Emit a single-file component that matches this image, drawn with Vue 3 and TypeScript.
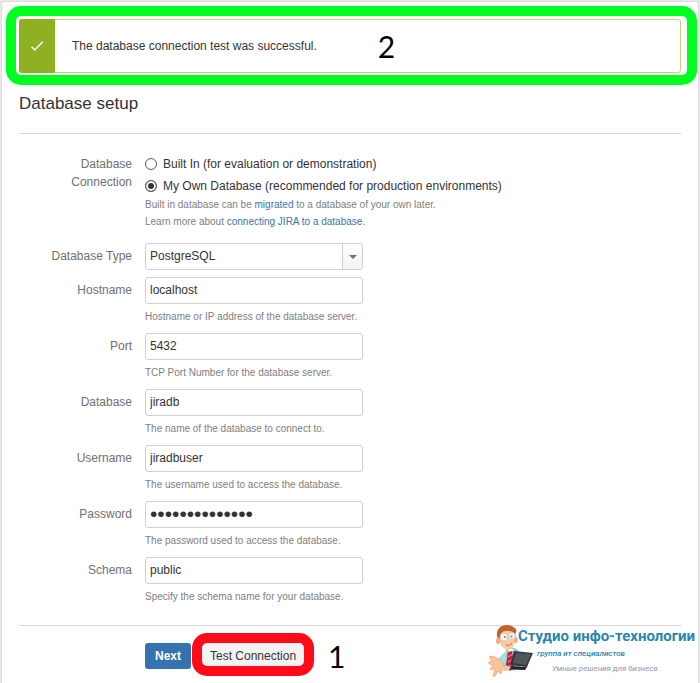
<script setup lang="ts">
import { ref } from 'vue'

interface Field {
  id: string
  label: string
  type: 'text' | 'password'
  value: string
  hint: string
}

const connection = ref<'builtin' | 'own'>('own')
const databaseType = ref('PostgreSQL')
const databaseTypes = ['PostgreSQL', 'MySQL', 'Oracle', 'SQL Server']

const fields = ref<Field[]>([
  { id: 'hostname', label: 'Hostname', type: 'text', value: 'localhost', hint: 'Hostname or IP address of the database server.' },
  { id: 'port', label: 'Port', type: 'text', value: '5432', hint: 'TCP Port Number for the database server.' },
  { id: 'database', label: 'Database', type: 'text', value: 'jiradb', hint: 'The name of the database to connect to.' },
  { id: 'username', label: 'Username', type: 'text', value: 'jiradbuser', hint: 'The username used to access the database.' },
  { id: 'password', label: 'Password', type: 'password', value: 'jiradbpassword', hint: 'The password used to access the database.' },
  { id: 'schema', label: 'Schema', type: 'text', value: 'public', hint: 'Specify the schema name for your database.' },
])
</script>

<template>
  <main class="panel">
    <div class="alert" role="status">
      <div class="alert-icon">
        <svg viewBox="0 0 14 12" width="14" height="12" aria-hidden="true">
          <path d="M1.500 6.800 4.800 10 12.800 1.800" fill="none" stroke="#fff" stroke-width="1.500" />
        </svg>
      </div>
      <p class="alert-text">The database connection test was successful.</p>
      <span class="step">2</span>
      <span class="ring ring-green"></span>
    </div>

    <h1>Database setup</h1>

    <form @submit.prevent>
      <div class="row connection" role="radiogroup" aria-labelledby="connection-label">
        <span id="connection-label" class="label">Database Connection</span>
        <div class="control">
          <label class="radio"><input v-model="connection" type="radio" name="connection" value="builtin" />Built In (for evaluation or demonstration)</label>
          <label class="radio"><input v-model="connection" type="radio" name="connection" value="own" />My Own Database (recommended for production environments)</label>
          <p class="hint">Built in database can be <a href="#migrate">migrated</a> to a database of your own later.</p>
          <p class="hint">Learn more about <a href="#connecting">connecting JIRA to a database</a>.</p>
        </div>
      </div>

      <div class="row type-row">
        <label class="label" for="database-type">Database Type</label>
        <div class="control">
          <div class="select-box">
            <select id="database-type" v-model="databaseType" class="box">
              <option v-for="t in databaseTypes" :key="t">{{ t }}</option>
            </select>
            <span class="arrow" aria-hidden="true"></span>
          </div>
        </div>
      </div>

      <div v-for="f in fields" :key="f.id" class="row field">
        <label class="label" :for="f.id">{{ f.label }}</label>
        <div class="control">
          <input :id="f.id" v-model="f.value" :type="f.type" class="box" />
          <p class="hint">{{ f.hint }}</p>
        </div>
      </div>

      <div class="actions">
        <button class="primary" type="submit">Next</button>
        <div class="marked">
          <button class="plain" type="button">Test Connection</button>
          <span class="ring ring-red"></span>
        </div>
        <span class="step">1</span>
      </div>
    </form>

    <div class="brand">
      <svg class="mascot" viewBox="0 0 50 54" width="50" height="54" aria-hidden="true">
        <path d="M18 24 Q26 20 31 27 L32 43 Q24 48 15 44 Z" fill="#83cfd0" />
        <path d="M27 28 Q35 31 33 38 L28 40 Z" fill="#5fb9be" />
        <path d="M17 27 Q10 33 7 38 L15 43 19 35 Z" fill="#a4dfdd" />
        <path d="M19 24 22 29 26 24 Z" fill="#fff" />
        <path d="M20 27 24 26 26 41 22 46 18 40 Z" fill="#c8203a" />
        <path d="M20 32 25 29 M20 37 26 34 M20 42 26 38" stroke="#f3a0a4" stroke-width="1" />
        <path d="M12 35 Q7 31 2 31 Q0 33 5 36 L1 37 Q-1 39 5 40 L2 44 Q2 46 7 43 L5 51 Q7 53 10 46 L13 49 Q15 48 13 43 L16 39 Z" fill="#fbc29b" stroke="#e99b74" stroke-width=".6" />
        <path d="M11 9 Q10 4 14 2 Q21-1 26 3 Q29 8 27 17 Q25 25 19 25 Q12 22 11 14 Z" fill="#fdc9a1" />
        <path d="M9 12 Q8 4 14 1 Q22-2 28 4 Q29 7 27 9 Q23 5 18 6 Q13 5 12 14 Z" fill="#c2632b" />
        <ellipse cx="10" cy="16" rx="2" ry="3" fill="#f2a67e" />
        <ellipse cx="28" cy="15" rx="1.600" ry="3" fill="#f2a67e" />
        <circle cx="16" cy="12" r="4" fill="#f7f4ef" stroke="#c9cbc9" />
        <circle cx="24" cy="11" r="3.400" fill="#f7f4ef" stroke="#c9cbc9" />
        <circle cx="17" cy="12" r="1" fill="#6c7f86" />
        <circle cx="23.500" cy="11.500" r="1" fill="#6c7f86" />
        <path d="M18 20 Q22 22 24 18" fill="none" stroke="#c76a58" stroke-width="1" />
        <path d="M26 26 45 28 39 42 22 40 Z" fill="#33383d" />
        <path d="M28 28 43 29 38 40 25 38 Z" fill="#50565c" />
        <path d="M20 41 39 42 37 45 17 44 Z" fill="#202428" />
        <path d="M14 43 Q18 39 23 42 L21 45 15 46 Z" fill="#fbc29b" />
      </svg>
      <div class="brand-text">
        <strong>Студио инфо-технологии</strong>
        <em class="tagline">группа ит специалистов</em>
        <em class="motto">Умные решения для бизнеса</em>
      </div>
    </div>
  </main>
</template>

<style>
body {
  background: #e9e9e9;
}
</style>

<style scoped>
* {
  box-sizing: border-box;
}

.panel {
  position: relative;
  min-height: calc(100vh - 1px);
  margin: 1px 1px 0;
  padding: 17px 17px 12px;
  border: 1px solid #ddd;
  border-bottom: 0;
  border-radius: 4px 4px 0 0;
  background: #fff;
  color: #333;
  font: 12px/18px "Liberation Sans", Arial, sans-serif;
}

p {
  margin: 0;
}

.alert {
  position: relative;
  display: flex;
  align-items: center;
  height: 54px;
  border: 1px solid #c3d27c;
  border-radius: 3px;
}

.alert-icon {
  display: flex;
  align-items: center;
  justify-content: center;
  align-self: stretch;
  width: 36px;
  margin: -1px 0 -1px -1px;
  border-radius: 3px 0 0 3px;
  background: #8eb021;
}

.alert-text {
  margin-left: 17px;
}

.step {
  color: #000;
  font: 30px/36px Lato, sans-serif;
}

.alert .step {
  margin-left: 61px;
}

.ring {
  position: absolute;
  border: 10px solid;
  pointer-events: none;
}

.ring-green {
  inset: -14px -17px -13px -14px;
  border-color: #00ff21;
  border-radius: 15px;
}

.ring-red {
  inset: -10px -4px -7px;
  border-color: #ff0a17;
  border-radius: 15px;
}

h1 {
  margin: 0;
  padding: 19px 0 17px;
  border-bottom: 1px solid #d8d8d8;
  font-size: 17px;
  font-weight: 400;
  line-height: 24px;
}

.row {
  display: flex;
  gap: 13px;
}

.label {
  width: 113px;
  padding-top: 4px;
  color: #707070;
  text-align: right;
}

.control {
  flex: 1;
}

.connection {
  padding-top: 21px;
}

.connection .label {
  padding: 0 0 0 30px;
}

.radio {
  display: flex;
  align-items: center;
  height: 22px;
  padding-bottom: 4px;
}

.radio + .radio {
  margin-bottom: -3px;
}

.radio input {
  appearance: none;
  width: 12px;
  height: 12px;
  margin: 0 6px 0 0;
  border: 1px solid #555;
  border-radius: 50%;
  background: #fff;
}

.radio input:checked {
  background: #333;
  box-shadow: inset 0 0 0 2px #fff;
}

.hint {
  color: #808080;
  font-size: 10px;
  line-height: 17px;
}

.field .hint {
  padding-top: 4px;
}

a {
  color: #3b73af;
  text-decoration: none;
}

.type-row {
  padding-top: 13px;
}

.field {
  height: 56px;
}

.type-row + .field {
  margin-top: 7px;
}

.box {
  display: block;
  width: 218px;
  height: 27px;
  padding: 0 4px 2px;
  border: 1px solid #d0d0d0;
  border-radius: 3px;
  background: #fff;
  color: #333;
  font: inherit;
}

.box[type='password'] {
  font-size: 21px;
}

.select-box {
  position: relative;
  width: 218px;
}

select.box {
  appearance: none;
}

.arrow {
  position: absolute;
  inset: 1px 1px 1px auto;
  display: grid;
  place-items: center;
  width: 20px;
  border-left: 1px solid #d0d0d0;
  border-radius: 0 2px 2px 0;
  background: linear-gradient(#fff, #f2f2f2);
  pointer-events: none;
}

.arrow::before {
  content: '';
  border: 4px solid transparent;
  border-top-color: #707070;
  border-bottom: 0;
}

.actions {
  display: flex;
  align-items: center;
  margin-top: 12px;
  padding: 12px 0 0 126px;
  border-top: 1px solid #d8d8d8;
}

button {
  height: 26px;
  border: 0;
  border-radius: 3px;
  font: inherit;
}

.primary {
  padding: 0 10px;
  background: #3572b0;
  color: #fff;
  font-weight: 700;
}

.marked {
  position: relative;
  margin: 0 18px 0 5px;
}

.plain {
  padding: 0 14px;
  background: #f3f3f3;
  color: #333;
}

.brand {
  position: absolute;
  right: 3px;
  bottom: 7px;
  display: flex;
  white-space: nowrap;
}

.mascot {
  margin-right: -20px;
}

.brand-text {
  display: flex;
  flex-direction: column;
}

.brand-text strong {
  color: #2a86ab;
  font-size: 15px;
  line-height: 22px;
}

.brand-text {
  font-family: Roboto, sans-serif;
}

.tagline {
  padding-left: 19px;
  color: #2a86ab;
  font-size: 8px;
  font-weight: 500;
  line-height: 14px;
}

.motto {
  padding-left: 34px;
  color: #9494ae;
  font-size: 8px;
  line-height: 16px;
}
</style>
